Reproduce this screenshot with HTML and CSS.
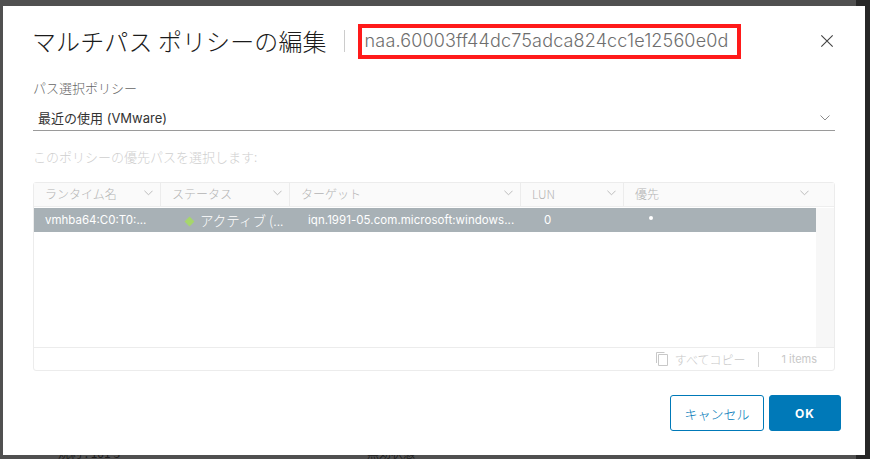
FILE: index.html
```html
<!DOCTYPE html>
<html lang="ja">
<head>
<meta charset="utf-8">
<title>マルチパス ポリシーの編集</title>
<link rel="stylesheet" href="styles.css">
</head>
<body>
<div class="behind"><span class="behind-a">規約 : 101 3</span><span class="behind-b">無効状態</span></div>
<div class="modal">
  <header class="head">
    <h1 class="title">マルチパス ポリシーの編集</h1>
    <span class="divider"></span>
    <span class="device">naa.60003ff44dc75adca824cc1e12560e0d</span>
    <svg class="close" viewBox="0 0 16 16"><path d="M1.5 1.5 14.5 14.5M14.5 1.5 1.5 14.5"/></svg>
  </header>
  <div class="field-label">パス選択ポリシー</div>
  <div class="select">
    <span>最近の使用 (VMware)</span>
    <svg class="chev chev-select" viewBox="0 0 10 6"><path d="M.5.5 5 5 9.5.5"/></svg>
  </div>
  <div class="hint">このポリシーの優先パスを選択します:</div>
  <div class="grid">
    <div class="grid-head">
      <div class="hc c1"><span>ランタイム名</span><svg class="chev" viewBox="0 0 10 6"><path d="M.5.5 5 5 9.5.5"/></svg></div>
      <div class="hc c2"><span>ステータス</span><svg class="chev" viewBox="0 0 10 6"><path d="M.5.5 5 5 9.5.5"/></svg></div>
      <div class="hc c3"><span>ターゲット</span><svg class="chev" viewBox="0 0 10 6"><path d="M.5.5 5 5 9.5.5"/></svg></div>
      <div class="hc c4"><span>LUN</span><svg class="chev" viewBox="0 0 10 6"><path d="M.5.5 5 5 9.5.5"/></svg></div>
      <div class="hc c5"><span>優先</span><svg class="chev" viewBox="0 0 10 6"><path d="M.5.5 5 5 9.5.5"/></svg></div>
    </div>
    <div class="grid-body">
      <div class="rows">
        <div class="row">
          <div class="rc c1">vmhba64:C0:T0:...</div>
          <div class="rc c2 status"><i class="dia"></i><span class="st">アクティブ (...</span></div>
          <div class="rc c3 target">iqn.1991-05.com.microsoft:windows...</div>
          <div class="rc c4 lun">0</div>
          <div class="rc c5r"><i class="dot"></i></div>
        </div>
      </div>
      <div class="scroll"></div>
    </div>
    <div class="grid-foot">
      <svg class="copy" viewBox="0 0 12 14"><path d="M.5 11V.5h8"/><path d="M2.5 2.5h9v11h-9z"/></svg>
      <span class="copy-text">すべてコピー</span>
      <span class="foot-sep"></span>
      <span class="count">1 items</span>
    </div>
  </div>
  <footer class="actions">
    <button class="btn cancel">キャンセル</button>
    <button class="btn ok">OK</button>
  </footer>
</div>
</body>
</html>
```
FILE: styles.css
```css
* { box-sizing: border-box; }
html, body { margin: 0; height: 100%; overflow: hidden; }
body {
  position: relative;
  width: 870px; height: 459px;
  background: linear-gradient(to right, #505050 0 856px, #272727 856px);
  padding: 6px 5px 4px 3px;
  font-family: Inter, "Noto Sans CJK JP", sans-serif;
  color: #565656;
}
.behind {
  position: absolute; left: 0; top: 447px; width: 856px; height: 12px;
  font-size: 12px; line-height: 12px; color: #1e1e1e;
  font-family: "Noto Sans CJK JP", sans-serif;
}
.behind-a { position: absolute; left: 58px; top: 0; }
.behind-b { position: absolute; left: 367px; top: 0; }
.modal {
  position: relative;
  height: 449px;
  background: #fff;
  padding: 18px 30px 0 30px;
  display: flex;
  flex-direction: column;
}
.head { display: flex; align-items: center; height: 34px; }
.title {
  margin: 0 0 0 -1px; font-size: 24px; font-weight: 300; color: #1b1b1b;
  font-family: "Noto Sans CJK JP", sans-serif; white-space: nowrap;
  line-height: 34px; letter-spacing: .1px;
}
.divider { width: 1px; height: 22px; background: #ccc; margin: 0 13px 0 17px; }
.device {
  border: 4px solid #ff1a1a;
  height: 35px; width: 383px;
  padding: 0 0 0 3px;
  line-height: 26px;
  font-size: 18px; font-weight: 300; color: #6e6e6e;
  letter-spacing: .15px;
  white-space: nowrap; overflow: hidden;
}
.close { width: 14px; height: 14px; margin-left: auto; margin-right: 1px; fill: none; stroke: #444; stroke-width: 1.3; }
.field-label {
  margin-top: 21px; font-size: 13px; line-height: 18px; color: #666;
  font-family: "Noto Sans CJK JP", sans-serif; font-weight: 300;
}
.select {
  margin-top: 10px; height: 24px; width: 802px;
  border-bottom: 1px solid #9a9a9a;
  display: flex; align-items: center; justify-content: space-between;
  padding: 0 5px 2px 5px;
  font-size: 13px; color: #333;
}
.chev { width: 9px; height: 6px; fill: none; stroke: #b5b5b5; stroke-width: 1; flex: none; }
.chev-select { stroke: #8c8c8c; width: 10px; }
.hint {
  margin-top: 17px; font-size: 13px; line-height: 18px; color: #cfcfcf;
  font-family: "Noto Sans CJK JP", sans-serif; font-weight: 300;
}
.grid {
  margin-top: 16px; width: 802px; height: 189px;
  border: 1px solid #ececec; border-radius: 3px;
  display: flex; flex-direction: column;
}
.grid-head {
  height: 24px; display: flex; background: #fafafa;
  border-bottom: 1px solid #eee; flex: none;
}
.hc {
  display: flex; align-items: center; justify-content: space-between;
  border-right: 1px solid #ececec;
  padding: 0 7px 3px 11px;
  font-size: 12px; color: #b4b4b4;
  font-family: "Noto Sans CJK JP", sans-serif; font-weight: 300;
}
.c1 { width: 127px; }
.c2 { width: 129px; }
.c3 { width: 231px; }
.c4 { width: 103px; }
.c5 { flex: 1; border-right: 0; padding-right: 25px; }
.grid-body { flex: 1; display: flex; min-height: 0; border-top: 1px solid #fff; }
.rows { flex: 1; }
.scroll { width: 18px; background: #f7f7f7; }
.row {
  height: 24px; background: #a8b1b6; color: #fff;
  display: flex; align-items: center;
  padding-bottom: 1px;
  font-size: 11.5px;
}
.rc { padding-left: 11px; white-space: nowrap; overflow: hidden; }
.status { display: flex; align-items: center; padding-left: 25px; }
.dia { width: 7px; height: 7px; background: #a6d66c; transform: rotate(45deg); flex: none; margin-top: 3px; }
.st { margin-left: 7px; font-size: 13.5px; font-family: "Noto Sans CJK JP", sans-serif; font-weight: 300; }
.target { padding-left: 18px; letter-spacing: .05px; }
.lun { padding-left: 23px; }
.c5r { position: relative; flex: 1; padding-left: 25px; }
.dot { display: block; width: 4px; height: 4px; background: #fff; border-radius: 50%; margin-bottom: 4px; }
.grid-foot {
  height: 23px; flex: none; border-top: 1px solid #ececec;
  display: flex; align-items: center; justify-content: flex-end;
  padding-right: 17px; color: #c8c8c8; font-size: 11px;
}
.copy { width: 12px; height: 14px; fill: none; stroke: #c8c8c8; stroke-width: 1; margin-right: 7px; }
.copy-text { font-size: 12px; font-family: "Noto Sans CJK JP", sans-serif; font-weight: 300; }
.foot-sep { width: 1px; height: 15px; background: #d4d4d4; margin: 0 22px 0 13px; }
.actions { margin-top: 24px; display: flex; justify-content: flex-end; gap: 5px; margin-right: -6px; }
.btn { height: 36px; border-radius: 3px; font-size: 12px; border: 1px solid #0079b8; }
.cancel { width: 94px; background: #fff; color: #0079b8; font-size: 13px; font-weight: 300; font-family: "Noto Sans CJK JP", sans-serif; }
.ok { width: 72px; background: #0079b8; color: #fff; font-weight: 700; font-family: Inter, sans-serif; letter-spacing: 1px; }
```
